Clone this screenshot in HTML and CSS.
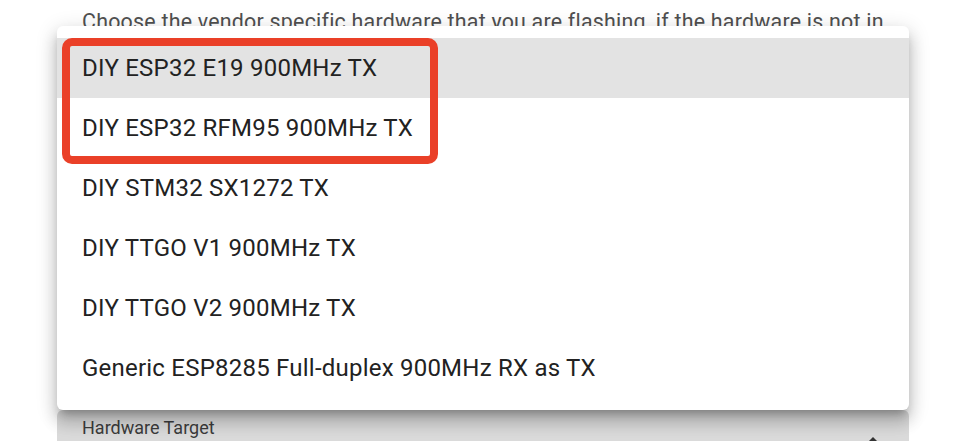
FILE: index.html
```html
<!DOCTYPE html>
<html lang="en">
<head>
<meta charset="utf-8">
<title>Hardware Target</title>
<link rel="stylesheet" href="styles.css">
</head>
<body>
<main class="page">
  <section class="intro">
    <p class="description">Choose the vendor specific hardware that you are flashing, if the hardware is not in the list, then try to find a compatible target or contact the vendor.</p>
  </section>
  <div class="field">
    <label class="field-label">Hardware Target</label>
    <div class="field-value"><span class="caret"></span></div>
    <svg class="arrow" width="20" height="10" viewBox="0 0 20 10"><path d="M2 10 L10 2 L18 10 Z" fill="#333"/></svg>
  </div>
</main>
<ul class="menu" role="listbox">
  <li class="menu-item selected">DIY ESP32 E19 900MHz TX</li>
  <li class="menu-item">DIY ESP32 RFM95 900MHz TX</li>
  <li class="menu-item">DIY STM32 SX1272 TX</li>
  <li class="menu-item">DIY TTGO V1 900MHz TX</li>
  <li class="menu-item">DIY TTGO V2 900MHz TX</li>
  <li class="menu-item">Generic ESP8285 Full-duplex 900MHz RX as TX</li>
</ul>
<div class="highlight"></div>
</body>
</html>
```
FILE: styles.css
```css
html, body {
  margin: 0;
  padding: 0;
  background: #ffffff;
  font-family: Roboto, "Noto Sans", Arial, sans-serif;
  overflow: hidden;
}
.page {
  padding: 0 68px 0 57px;
}
.intro {
  height: 410px;
  overflow: hidden;
}
.description {
  margin: 6px 0 0;
  padding: 0 25px;
  font-size: 21.4px;
  line-height: 32px;
  letter-spacing: 0.23px;
  color: #505050;
}
.field {
  position: relative;
  background: #dadada;
  height: 80px;
  padding: 7px 25px 0;
  border-radius: 6px 6px 0 0;
}
.field-label {
  display: block;
  font-size: 18px;
  line-height: 21px;
  color: #3c3c3c;
}
.field-value {
  height: 30px;
  padding-left: 292px;
  padding-top: 6px;
}
.caret {
  display: block;
  width: 2px;
  height: 12px;
  background: #222;
}
.arrow {
  position: absolute;
  right: 26px;
  top: 25px;
}
.menu {
  position: absolute;
  left: 57px;
  top: 26px;
  width: 852px;
  margin: 0;
  padding: 12px 0;
  list-style: none;
  background: #ffffff;
  border-radius: 6px;
  box-shadow: 0 7px 8px -4px rgba(0,0,0,0.25), 0 12px 15px 2px rgba(0,0,0,0.14), 0 5px 20px 3px rgba(0,0,0,0.12);
}
.menu-item {
  height: 60px;
  display: flex;
  align-items: center;
  padding: 0 25px;
  font-size: 24px;
  letter-spacing: 0.225px;
  color: #222222;
}
.menu-item.selected {
  background: #e3e3e3;
}
.highlight {
  position: absolute;
  left: 62px;
  top: 38px;
  width: 360px;
  height: 110px;
  border: 8px solid #ea4028;
  border-radius: 10px;
}
```
